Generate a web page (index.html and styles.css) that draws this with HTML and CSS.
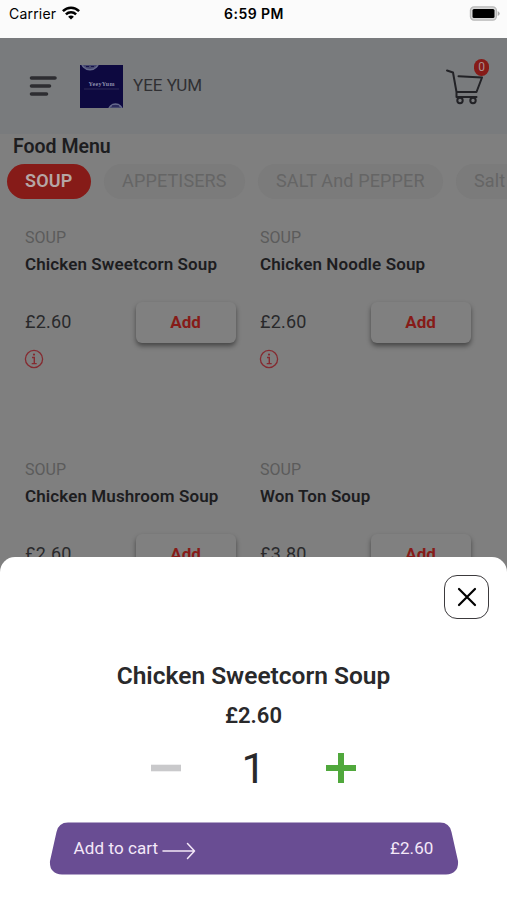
FILE: index.html
```html
<!DOCTYPE html>
<html lang="en">
<head>
<meta charset="utf-8">
<title>Yee Yum</title>
<link rel="stylesheet" href="styles.css">
</head>
<body>
<div class="phone">
  <div class="status">
    <div class="carrier"><span>Carrier</span>
      <svg width="18" height="14" viewBox="0 0 18 14" fill="none" stroke="#000" stroke-width="2.500"><path d="M.9 5.200C5.500 .6 12.500 .6 17.100 5.200M3.900 8.300c2.900-2.800 7.300-2.800 10.200 0"/><path d="M9 13.600 6.100 10.700c1.600-1.500 4.200-1.500 5.800 0z" fill="#000" stroke="none"/></svg>
    </div>
    <div class="time">6:59 PM</div>
    <svg class="battery" width="31" height="15" viewBox="0 0 31 15"><rect x="1.400" y=".9" width="26" height="13.200" rx="3.600" fill="#d8d8d8" stroke="#b8b8b8" stroke-width="1.200"/><rect x="3.500" y="3" width="22" height="9" rx="1.500"/><path d="M28.700 5v5q2-1 2-2.500t-2-2.500" fill="#aaa"/></svg>
  </div>
  <header class="header">
    <svg class="burger" width="28" height="20" viewBox="0 0 28 20" stroke="#2d2d31" stroke-width="3.600" stroke-linecap="round"><path d="M2.500 2h23.500M2.500 10h18M2.500 18h15"/></svg>
    <svg class="logo" width="43" height="43" viewBox="0 0 43 43"><rect width="43" height="43" fill="#0d0940"/><g stroke="#65698c" fill="#44476e"><circle cx="10" cy="-4" r="8.800" stroke-width="1.500"/><circle cx="35.500" cy="46" r="7" stroke-width="1.500"/></g><path d="M6 1.500h3m2 0h3M32 41h7" stroke="#17134b"/><path d="M4 24h35" stroke="#3c3a62" stroke-width=".7"/><text x="21.500" y="21" text-anchor="middle" textLength="26" class="logo-text">YeeyYum</text></svg>
    <span class="shop">YEE YUM</span>
    <div class="cart">
      <svg width="38" height="38" viewBox="0 0 38 38" fill="none" stroke="#222226" stroke-width="2" stroke-linecap="round" stroke-linejoin="round"><path d="m1 3.500 6 2L10.500 25h20L36 10.500 12.500 9.300M10.500 25v5M10.500 30h20"/><circle cx="14" cy="33.500" r="2.700"/><circle cx="27" cy="33.500" r="2.700"/></svg>
      <span class="badge">0</span>
    </div>
  </header>
  <main class="menu">
    <h1 class="heading">Food Menu</h1>
    <nav class="tabs"><span class="tab active">SOUP</span><span class="tab t2">APPETISERS</span><span class="tab t3">SALT And PEPPER</span><span class="tab t4">Salt</span></nav>
    <div class="grid">
      <article class="item"><div class="cat">SOUP</div><h2 class="name">Chicken Sweetcorn Soup</h2><div class="row"><span class="price">£2.60</span><button class="add">Add</button></div><svg class="info" width="20" height="20" viewBox="0 0 20 20" fill="none" stroke="#852a30"><circle cx="10" cy="10" r="8.600" stroke-width="1.300"/><path d="M8 8.500h2.300v6M7.700 14.600h5" stroke-width="1.400"/><circle cx="10" cy="5.600" r="1.100" fill="#852a30" stroke="none"/></svg></article>
      <article class="item"><div class="cat">SOUP</div><h2 class="name">Chicken Noodle Soup</h2><div class="row"><span class="price">£2.60</span><button class="add">Add</button></div><svg class="info" width="20" height="20" viewBox="0 0 20 20" fill="none" stroke="#852a30"><circle cx="10" cy="10" r="8.600" stroke-width="1.300"/><path d="M8 8.500h2.300v6M7.700 14.600h5" stroke-width="1.400"/><circle cx="10" cy="5.600" r="1.100" fill="#852a30" stroke="none"/></svg></article>
      <article class="item"><div class="cat">SOUP</div><h2 class="name">Chicken Mushroom Soup</h2><div class="row"><span class="price">£2.60</span><button class="add">Add</button></div></article>
      <article class="item"><div class="cat">SOUP</div><h2 class="name">Won Ton Soup</h2><div class="row"><span class="price">£3.80</span><button class="add">Add</button></div></article>
    </div>
  </main>
  <section class="sheet">
    <button class="close"><svg width="20" height="20" viewBox="0 0 20 20" stroke="#000" stroke-width="2.200" stroke-linecap="round"><path d="m2 2 16 16M18 2 2 18"/></svg></button>
    <h2 class="title">Chicken Sweetcorn Soup</h2>
    <div class="total">£2.60</div>
    <div class="stepper">
      <svg width="30" height="30" viewBox="0 0 30 30"><path d="M0 11.700h30v6.600H0z" fill="#c9c9cb"/></svg>
      <span class="qty">1</span>
      <svg width="30" height="30" viewBox="0 0 30 30"><path d="M12 0h6v12h12v6H18v12h-6V18H0v-6h12z" fill="#50a83c"/></svg>
    </div>
    <button class="checkout">
      <svg class="shape" width="410" height="53" viewBox="0 0 410 53"><path d="M19 .5H391Q400.500 .5 402.500 10L409 39Q410 51.500 397 52.500H13Q0 51.500 1 39L7.500 10Q9.500 .5 19 .5Z" fill="#694d93"/></svg>
      <span class="label">Add to cart</span>
      <svg class="arrow" width="34" height="18" viewBox="0 0 34 18" fill="none" stroke="#f4e8f8" stroke-width="1.500" stroke-linecap="round" stroke-linejoin="round"><path d="M1 9h31.500M25.500 1.500 32.500 9l-7 7.500"/></svg>
      <span class="amount">£2.60</span>
    </button>
  </section>
</div>
</body>
</html>
```
FILE: styles.css
```css
* { box-sizing: border-box; }
body { margin: 0; font-family: Roboto, sans-serif; color: #1d1d1f; }
h1, h2 { margin: 0; }
button { font-family: inherit; border: 0; padding: 0; }
.phone { position: relative; width: 507px; height: 900px; overflow: hidden; background: #7f7f7f; }
.status { height: 38px; padding: 0 7px 11px 9px; background: #fbfbfb; color: #000; display: grid; grid-template-columns: 1fr auto 1fr; align-items: center; font-family: Inter, sans-serif; font-size: 14px; }
.carrier { display: flex; align-items: center; gap: 6px; letter-spacing: .2px; }
.carrier svg { margin-top: -2px; }
.time { font-weight: 600; letter-spacing: .45px; margin-right: 1px; }
.battery { justify-self: end; margin-top: -1px; }
.header { height: 96px; background: #797b7d; display: flex; align-items: center; padding: 0 17px 0 29px; }
.logo { margin-left: 23px; }
.logo-text { font: bold 6px "Liberation Serif", serif; fill: #8c8dab; }
.shop { margin: -2px 0 0 10px; font-size: 17px; color: #303033; }
.cart { position: relative; margin-left: auto; width: 44px; height: 38px; }
.badge { position: absolute; right: 1px; top: -8px; width: 15px; height: 17px; border-radius: 8px; background: #861b18; color: #aa8f8f; font-size: 12px; line-height: 17px; text-align: center; }
.heading { padding-left: 13px; height: 30px; line-height: 25px; font-size: 19.500px; font-weight: 600; }
.tabs { display: flex; gap: 13px; padding-left: 7px; white-space: nowrap; }
.tab { flex: none; height: 35px; line-height: 33px; padding: 0 18px; border-radius: 18px; background: #7b7b7b; color: #656565; font-size: 18px; letter-spacing: .15px; }
.active { width: 84px; background: #861b18; color: #b5a6a5; font-weight: 600; }
.t2 { width: 141px; }
.t3 { width: 185px; }
.grid { display: grid; grid-template-columns: 235px 235px; grid-auto-rows: 232px; padding: 28px 0 0 25px; }
.cat { font-size: 16px; line-height: 22px; color: #5b5b5b; }
.name { margin-top: 1px; font-size: 17px; line-height: 28px; font-weight: 600; letter-spacing: .1px; white-space: nowrap; }
.row { display: flex; justify-content: space-between; align-items: center; width: 211px; margin-top: 24px; }
.price { margin-top: -2px; font-size: 18px; letter-spacing: .2px; color: #29292b; }
.add { width: 100px; height: 41px; padding: 0 1px 1px 0; border-radius: 6px; background: #808080; color: #861b18; font-size: 17px; font-weight: 700; box-shadow: 0 3px 5px rgba(0,0,0,.45); }
.info { display: block; margin: 6px 0 0 -1px; }
.sheet { position: absolute; left: 0; right: 0; bottom: 0; height: 343px; background: #fff; border-radius: 15px 15px 0 0; padding: 18px 18px 0; display: flex; flex-direction: column; align-items: center; color: #29292b; }
.close { align-self: flex-end; width: 45px; height: 44px; border: 1.5px solid #3c3a3d; border-radius: 13px; background: #fff; display: flex; align-items: center; justify-content: center; }
.title { margin-top: 41px; font-size: 24.500px; line-height: 32px; font-weight: 600; white-space: nowrap; }
.total { margin-top: 11px; font-size: 22px; line-height: 26px; font-weight: 600; }
.stepper { display: flex; justify-content: space-between; align-items: center; width: 206px; height: 50px; margin-top: 14px; }
.qty { font-size: 43px; line-height: 48px; margin-top: -1px; font-weight: 400; }
.checkout { position: relative; display: flex; align-items: center; width: 410px; height: 53px; margin-top: 29px; padding: 0 25px 2px; background: none; color: #f4e8f8; font-size: 17px; letter-spacing: .1px; }
.shape { position: absolute; left: 0; top: 0; }
.label, .arrow, .amount { position: relative; }
.arrow { margin: 6px 0 0 4px; }
.amount { margin-left: auto; }
```
